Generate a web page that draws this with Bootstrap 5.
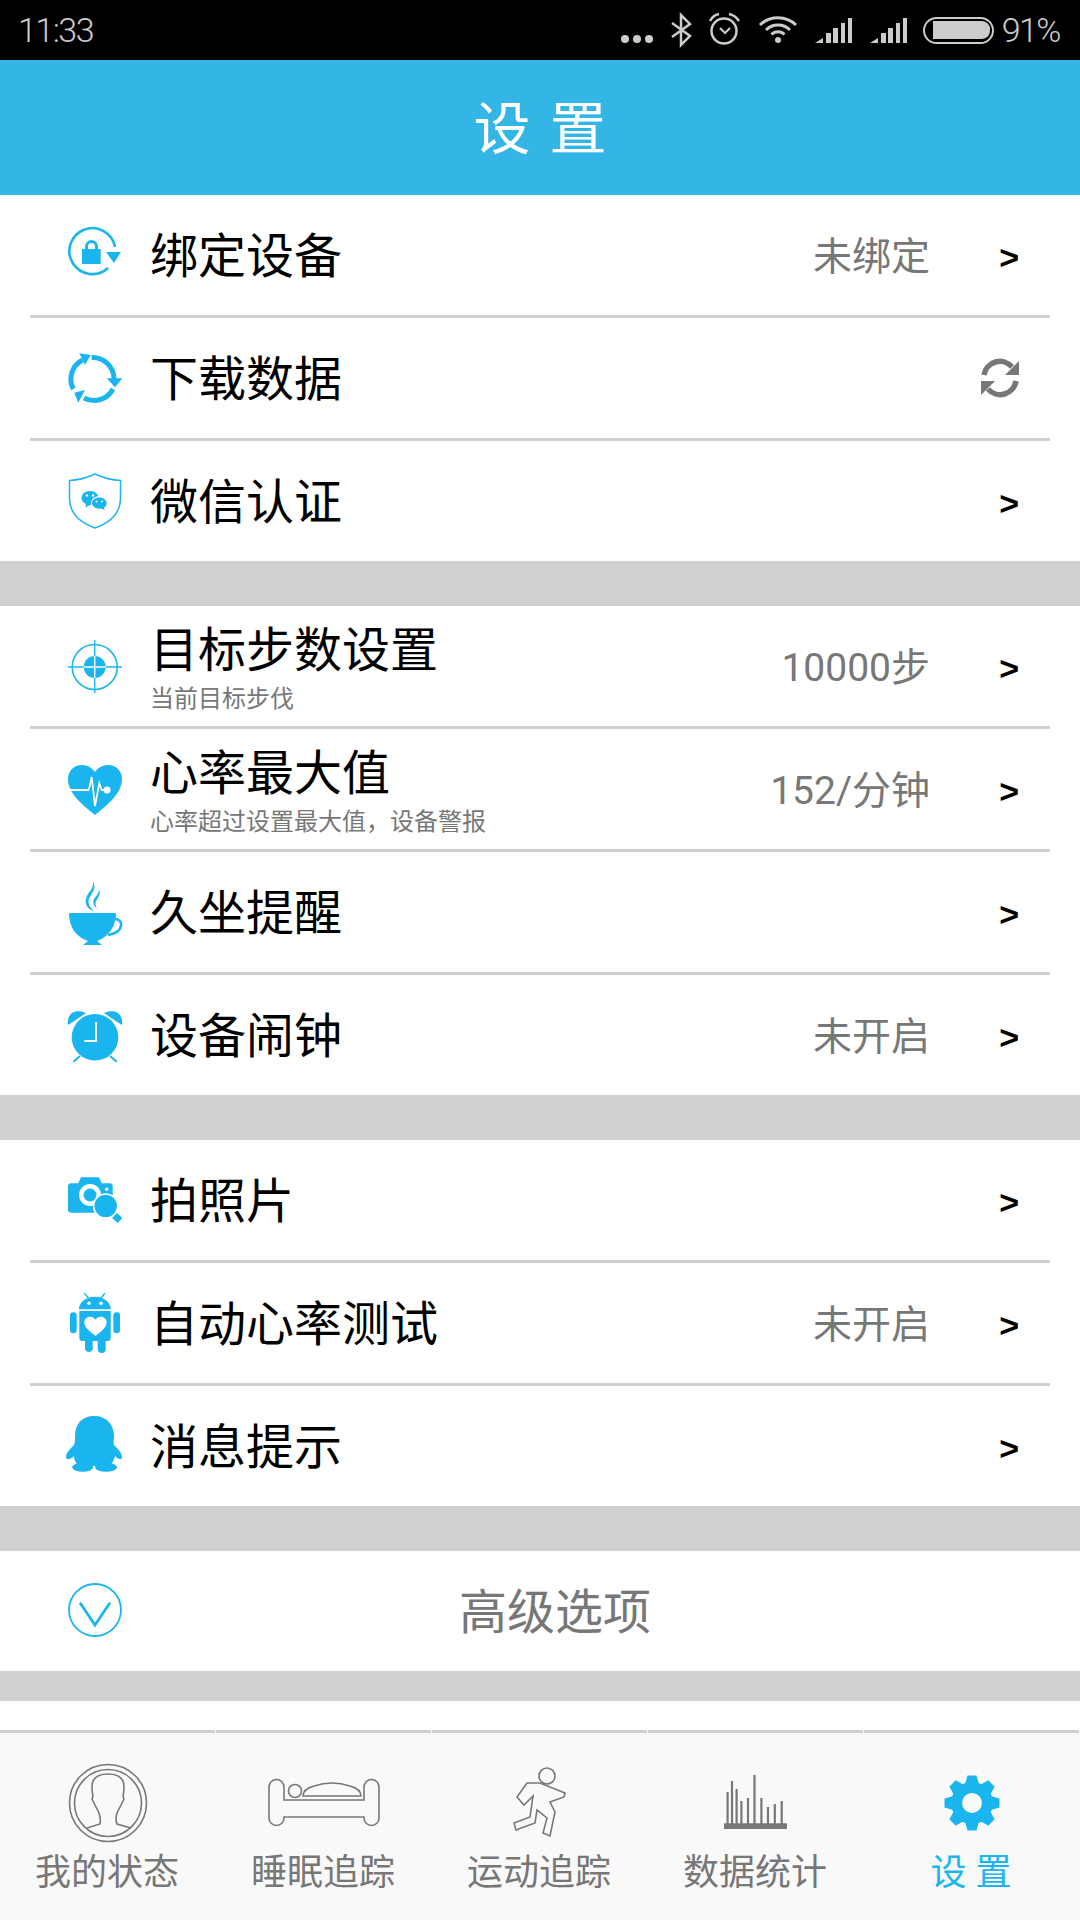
<!DOCTYPE html>
<html lang="zh-CN">
<head>
<meta charset="UTF-8" />
<meta name="viewport" content="width=device-width, initial-scale=1.0" />
<title>设置</title>
<link rel="stylesheet" href="https://cdn.jsdelivr.net/npm/bootstrap@5.3.3/dist/css/bootstrap.min.css" />
<style>
  body {
    width: 1080px;
    height: 1920px;
    background: #fff;
    font-family: Roboto, "Noto Sans CJK SC", sans-serif;
    overflow: hidden;
  }
  .status-strip { height: 60px; background: #000; color: #ccc; font-size: 34px; font-weight: 300; letter-spacing: -1.5px; padding: 0 20px 0 18px; }
  .status-strip span { line-height: 60px; }
  .page-head { height: 135px; padding-top: 4px; background: #33b5e5; color: #fff; font-size: 57px; word-spacing: 5px; }
  .set-list { --bs-list-group-border-radius: 0; }
  .set-list .set-row {
    height: 123px;
    margin: 0 30px;
    padding: 0 30px 0 34px;
    border: 0;
    border-bottom: 3px solid #d0d0d0;
    background: transparent;
    color: #000;
  }
  .set-list .set-row:last-child { height: 120px; border-bottom: 0; }
  .row-icon { width: 60px; height: 60px; flex: none; margin-right: 26px; display: block; overflow: visible; }
  .row-title { font-size: 48px; line-height: 52px; padding-top: 4px; }
  .row-sub { font-size: 24px; line-height: 28px; margin-top: 8px; color: #777; }
  .row-block .row-title { padding-top: 0; }
  .row-block { padding-top: 5px; }
  .row-value { font-size: 39px; color: #777; margin-right: 50px; padding-top: 4px; }
  .row-arrow { width: 40px; padding: 4px 1px 0 0; text-align: right; font: bold 34px/40px "Liberation Sans", sans-serif; color: #000; }
  .sync-icon { width: 40px; height: 40px; display: block; }
  .gap-band { height: 45px; background: #d0d0d0; }
  .gap-band-thin { height: 30px; background: #d0d0d0; }
  .adv-label { font-size: 48px; color: #777; padding-top: 4px; }
  .set-list .adv-row { height: 120px; padding-right: 90px; }
  .tab-bar { height: 190px; background: #f9f9f9; }
  .tab-item { width: 216px; color: #777; font-size: 36px; line-height: 44px; }
  .tab-item::before { content: ""; display: block; height: 3px; background: #d0d0d0; margin-right: 1px; }
  .tab-item svg { display: block; width: 120px; height: 80px; margin: 30px auto 7px; }
  .tab-label { display: block; padding: 1px 2px 0 0; }
  .tab-on { color: #1ab5ef; }
  .ico { fill: #1ab5ef; }
  .ico-line { fill: none; stroke: #1ab5ef; }
  .tab-line { fill: none; stroke: #777; stroke-width: 1.6; }
</style>
</head>
<body class="d-flex flex-column">

  <div class="status-strip d-flex justify-content-between align-items-center">
    <span>11:33</span>
    <div class="d-flex align-items-center">
      <svg width="373" height="60" viewBox="0 0 373 60">
        <g fill="#ccc">
          <circle cx="4" cy="39" r="4" /><circle cx="16" cy="39" r="4" /><circle cx="28" cy="39" r="4" />
          <circle cx="157" cy="40" r="3" />
          <path d="M194 43l8-5v5z" />
          <rect x="205" y="33" width="5" height="10" /><rect x="212" y="28" width="5" height="15" /><rect x="220" y="23" width="4" height="20" /><rect x="227" y="18" width="4" height="25" />
          <path d="M249 43l8-5v5z" />
          <rect x="260" y="33" width="5" height="10" /><rect x="267" y="28" width="5" height="15" /><rect x="275" y="23" width="4" height="20" /><rect x="282" y="18" width="4" height="25" />
          <path d="M312 21h49a8 8 0 0 1 8 9a8 8 0 0 1-8 9h-49z" />
        </g>
        <g fill="none" stroke="#ccc">
          <path d="M51 23L69 36 60 45V15L69 24 51 37" stroke-width="2.5" />
          <circle cx="103" cy="31" r="12.5" stroke-width="2.5" />
          <path d="M89 21Q92 15 98 14M108 14Q114 15 118 21" stroke-width="2.5" />
          <path d="M99 28L104 33 109 28" stroke-width="2" />
          <path d="M139 25A26 26 0 0 1 175 25M145 30A17 17 0 0 1 169 30M150.500 34.500A9 9 0 0 1 163.500 34.500" stroke-width="3" />
          <rect x="303" y="18" width="69" height="25" rx="12.500" stroke-width="2" />
        </g>
      </svg>
      <span class="ms-2">91%</span>
    </div>
  </div>

  <div class="page-head d-flex align-items-center justify-content-center">设 置</div>

  <div class="list-group set-list">
    <div class="list-group-item set-row d-flex align-items-center">
      <svg class="row-icon" viewBox="0 0 60 60">
        <path class="ico-line" stroke-width="2.600" d="M44 43A23 23 0 1 1 51 22" />
        <path class="ico" d="M42 27H57L50 38ZM18 24H36.700V39H18Z" />
        <path class="ico-line" stroke-width="3" d="M22.500 25V21.500A5 5 0 0 1 32.500 21.500V25" />
      </svg>
      <span class="row-title">绑定设备</span>
      <span class="row-value ms-auto">未绑定</span>
      <span class="row-arrow">&gt;</span>
    </div>
    <div class="list-group-item set-row d-flex align-items-center">
      <svg class="row-icon" viewBox="0 0 60 60">
        <path class="ico-line" stroke-width="5" d="M27.700 9.500A21.500 21.500 0 0 1 50 31M49 41A21.500 21.500 0 0 1 20 50M9.300 41A21.500 21.500 0 0 1 18.500 12" />
        <path class="ico" d="M42.700 30.300H58.300L51 39.300ZM21 42L10.300 44.700 14.300 54.700ZM15.300 5.300L26.700 7 21 17Z" />
      </svg>
      <span class="row-title">下载数据</span>
      <span class="ms-auto d-block">
        <svg class="sync-icon" viewBox="0 0 40 40">
          <path fill="none" stroke="#777" stroke-width="5.500" d="M4 17A16 16 0 0 1 32 9M36 23A16 16 0 0 1 8 31" />
          <path fill="#777" d="M39 3V17H25ZM1 37V23H15Z" />
        </svg>
      </span>
    </div>
    <div class="list-group-item set-row d-flex align-items-center">
      <svg class="row-icon" viewBox="0 0 60 60">
        <path class="ico-line" stroke-width="1.500" d="M31 3Q18 9 5.500 9.500V28Q6 48 31 57Q56 48 56.500 28V9.500Q44 9 31 3Z" />
        <path class="ico" d="M26 20C31 20 34.500 23 34.500 27C34.500 31 31 34 26 34L21.500 36.500 22 33C19.500 32 17.500 30 17.500 27C17.500 23 21 20 26 20Z" />
        <ellipse cx="35.300" cy="32" rx="8.300" ry="7" fill="#fff" />
        <path class="ico" d="M35.300 26.500C39.500 26.500 42.700 29 42.700 32C42.700 34.500 41 36 40 36.500L40.500 39 37.500 37.500C33 38.500 28 36 28 32C28 29 31 26.500 35.300 26.500Z" />
        <g fill="#fff"><circle cx="23" cy="24.500" r="1.200" /><circle cx="29" cy="24.500" r="1.200" /><circle cx="32.500" cy="30.500" r="1" /><circle cx="38" cy="30.500" r="1" /></g>
      </svg>
      <span class="row-title">微信认证</span>
      <span class="row-arrow ms-auto">&gt;</span>
    </div>
  </div>

  <div class="gap-band"></div>

  <div class="list-group set-list">
    <div class="list-group-item set-row d-flex align-items-center">
      <svg class="row-icon" viewBox="0 0 60 60">
        <circle class="ico-line" cx="30.700" cy="31" r="22.500" stroke-width="1.600" />
        <circle class="ico" cx="30.700" cy="31" r="11" />
        <path class="ico-line" stroke-width="1.400" d="M4 31H19.700M41.700 31H58M30.700 4V20M30.700 42V57" />
        <path fill="none" stroke="#fff" stroke-width="1.400" d="M19.700 31H41.700M30.700 20V42" />
      </svg>
      <div class="row-block">
        <div class="row-title">目标步数设置</div>
        <div class="row-sub">当前目标步伐</div>
      </div>
      <span class="row-value ms-auto">10000步</span>
      <span class="row-arrow">&gt;</span>
    </div>
    <div class="list-group-item set-row d-flex align-items-center">
      <svg class="row-icon" viewBox="0 0 60 60">
        <path class="ico" d="M31 56C20 47 4 35 4 20C4 12 10 6 18 6C24 6 28 9 31 13C34 9 38 6 44 6C52 6 58 12 58 20C58 35 42 47 31 56Z" />
        <path fill="none" stroke="#fff" stroke-width="1.800" d="M5 31H24.300L25.500 28 27.700 18 31 47 35.300 24.300 37.700 31H42" />
        <circle cx="43" cy="31" r="3.500" fill="#fff" />
      </svg>
      <div class="row-block">
        <div class="row-title">心率最大值</div>
        <div class="row-sub">心率超过设置最大值，设备警报</div>
      </div>
      <span class="row-value ms-auto">152/分钟</span>
      <span class="row-arrow">&gt;</span>
    </div>
    <div class="list-group-item set-row d-flex align-items-center">
      <svg class="row-icon" viewBox="0 0 60 60">
        <path class="ico" d="M5 31H52C52 47 42 56 33 59L38 63H19L24 59C14 56 5 47 5 31Z" />
        <path class="ico-line" stroke-width="2.600" d="M51 37C55 37 58 40 57 44C56 49 50 52 44 53" />
        <path class="ico" d="M29 0C34 8 24 14 24.500 20C25 24 27 27 30 29C25 28 21.500 24 21.700 19C22 11 30 8 29 0ZM35 7C38 13 32 17 31.500 21C31.300 23 32 25 33 26C30 25 29 22 29.500 19C30 15 35 13 35 7Z" />
      </svg>
      <span class="row-title">久坐提醒</span>
      <span class="row-arrow ms-auto">&gt;</span>
    </div>
    <div class="list-group-item set-row d-flex align-items-center">
      <svg class="row-icon" viewBox="0 0 60 60">
        <circle class="ico" cx="31" cy="32.300" r="23.300" />
        <path class="ico" d="M4.300 20C2 10 10 3 22 8ZM57.700 20C60 10 52 3 40 8Z" />
        <path class="ico-line" stroke-width="2" d="M9.300 56.700L16 51M52.700 56.700L46 51" />
        <path fill="none" stroke="#fff" stroke-width="2" d="M32 17V36H20.300" />
      </svg>
      <span class="row-title">设备闹钟</span>
      <span class="row-value ms-auto">未开启</span>
      <span class="row-arrow">&gt;</span>
    </div>
  </div>

  <div class="gap-band"></div>

  <div class="list-group set-list">
    <div class="list-group-item set-row d-flex align-items-center">
      <svg class="row-icon" viewBox="0 0 60 60">
        <path class="ico" d="M7 13.300H14.300L17 7.300H35L37.700 13.300H46C47.500 13.300 48.700 14.500 48.700 16V40C48.700 41.500 47.500 42.700 46 42.700H7C5.500 42.700 4 41.500 4 40V16C4 14.500 5.500 13.300 7 13.300Z" />
        <circle fill="#fff" cx="26" cy="25" r="11" />
        <circle class="ico" cx="26" cy="25" r="6.500" />
        <circle fill="#fff" cx="42.700" cy="19.300" r="1.700" />
        <circle class="ico" cx="41.700" cy="36" r="12" stroke="#fff" stroke-width="1.600" />
        <path class="ico-line" stroke-width="7" d="M50.500 45.500L56 50.500" />
      </svg>
      <span class="row-title">拍照片</span>
      <span class="row-arrow ms-auto">&gt;</span>
    </div>
    <div class="list-group-item set-row d-flex align-items-center">
      <svg class="row-icon" viewBox="0 0 60 60">
        <path class="ico" d="M15 16.300A15.800 12.600 0 0 1 46.700 16.300ZM15.300 18H46.700V45A3 3 0 0 1 43.700 48H41.700V56A4 4 0 0 1 33.700 56V48H28.700V56A4 4 0 0 1 21 56V48H18.300A3 3 0 0 1 15.300 45Z" />
        <rect class="ico" x="6" y="19.300" width="6.700" height="21" rx="3.300" />
        <rect class="ico" x="49.300" y="19.300" width="6.700" height="21" rx="3.300" />
        <path class="ico-line" stroke-width="1.300" d="M20.300 .3L25.300 6M41 .3L36 6" />
        <g fill="#fff"><circle cx="25" cy="10.300" r="1.700" /><circle cx="37" cy="10.300" r="1.700" />
          <path d="M31.500 43C27 39 20.300 35 20.300 29C20.300 26 23 23.700 26 23.700C28.300 23.700 30.300 25 31.500 26.700C32.700 25 34.700 23.700 37 23.700C40 23.700 42.700 26 42.700 29C42.700 35 36 39 31.500 43Z" /></g>
      </svg>
      <span class="row-title">自动心率测试</span>
      <span class="row-value ms-auto">未开启</span>
      <span class="row-arrow">&gt;</span>
    </div>
    <div class="list-group-item set-row d-flex align-items-center">
      <svg class="row-icon" viewBox="0 0 60 60">
        <path class="ico" d="M30 0C42 0 50 8 50 20C50 24 49 26 50 29C54 33 58 37 58 41C58 44 55 44 51 40C50 46 46 50 42 50H18C14 50 10 46 10 40C6 44 2 44 2 41C2 37 6 33 10 29C11 26 11 24 11 20C11 8 18 0 30 0Z" />
        <ellipse class="ico" cx="18.700" cy="51.300" rx="10.500" ry="4.500" />
        <ellipse class="ico" cx="42" cy="51.300" rx="11" ry="4.500" />
      </svg>
      <span class="row-title">消息提示</span>
      <span class="row-arrow ms-auto">&gt;</span>
    </div>
  </div>

  <div class="gap-band"></div>

  <div class="list-group set-list">
    <div class="list-group-item set-row adv-row d-flex align-items-center">
      <svg class="row-icon" viewBox="0 0 60 60">
        <circle class="ico-line" cx="31" cy="29" r="26" stroke-width="1.800" />
        <path class="ico-line" stroke-width="2.800" d="M16 21.700L31 44 46 21.700" />
      </svg>
      <span class="adv-label flex-grow-1 text-center">高级选项</span>
    </div>
  </div>

  <div class="gap-band-thin"></div>

  <div class="tab-bar d-flex mt-auto">
    <div class="tab-item text-center">
      <svg viewBox="0 0 120 80">
        <circle class="tab-line" cx="60" cy="40" r="38.500" />
        <circle class="tab-line" cx="60" cy="40" r="33.500" />
        <path class="tab-line" d="M39 65L52 61Q53 56 51 50L44 36 45 33Q44 30 44 24Q44 11 60 11Q76 11 76 24Q76 30 75 33L76 36 69 50Q67 56 69 61L83 65" />
      </svg>
      <span class="tab-label">我的状态</span>
    </div>
    <div class="tab-item text-center">
      <svg viewBox="0 0 120 80">
        <path class="tab-line" d="M20 37V24A7.500 7.500 0 0 0 5 24V55A7.500 7.500 0 0 0 20 55V54H100V55A7.500 7.500 0 0 0 115 55V24A7.500 7.500 0 0 0 100 24V37Z" />
        <circle class="tab-line" cx="31" cy="28" r="6.500" />
        <path class="tab-line" d="M39 33Q39 26 50 23Q68 17 86 23Q97 26 97 33Z" />
      </svg>
      <span class="tab-label">睡眠追踪</span>
    </div>
    <div class="tab-item text-center">
      <svg viewBox="0 0 120 80">
        <circle class="tab-line" cx="67" cy="13" r="8" />
        <path class="tab-line" d="M47 20H60L85 30 84 34 70 39 75 49 70 73 63 70 67 55 57 47 55 60 36 67 34 60 50 54 53 33 44 42 37 34Z" />
      </svg>
      <span class="tab-label">运动追踪</span>
    </div>
    <div class="tab-item text-center">
      <svg viewBox="0 0 120 80">
        <path fill="none" stroke="#777" stroke-width="2.200" d="M31.600 61V29M36 61V18M40.600 61V26M45.400 61V38M52 61V35M58.500 61V12M65.400 61V35M72 61V44M78.800 61V41M85.700 61V38" />
        <rect x="28" y="60.300" width="63" height="5.700" fill="#777" />
      </svg>
      <span class="tab-label">数据统计</span>
    </div>
    <div class="tab-item tab-on text-center">
      <svg viewBox="0 0 120 80">
        <g class="ico" transform="translate(60 40)">
          <circle r="21" />
          <path id="gear-tooth" d="M-4.500 -27.500H4.500L7.500 -17H-7.500Z" />
          <use href="#gear-tooth" transform="rotate(45)" />
          <use href="#gear-tooth" transform="rotate(90)" />
          <use href="#gear-tooth" transform="rotate(135)" />
          <use href="#gear-tooth" transform="rotate(180)" />
          <use href="#gear-tooth" transform="rotate(225)" />
          <use href="#gear-tooth" transform="rotate(270)" />
          <use href="#gear-tooth" transform="rotate(315)" />
          <circle r="10" fill="#f9f9f9" />
        </g>
      </svg>
      <span class="tab-label">设 置</span>
    </div>
  </div>

  <script src="https://cdn.jsdelivr.net/npm/bootstrap@5.3.3/dist/js/bootstrap.bundle.min.js"></script>
</body>
</html>
